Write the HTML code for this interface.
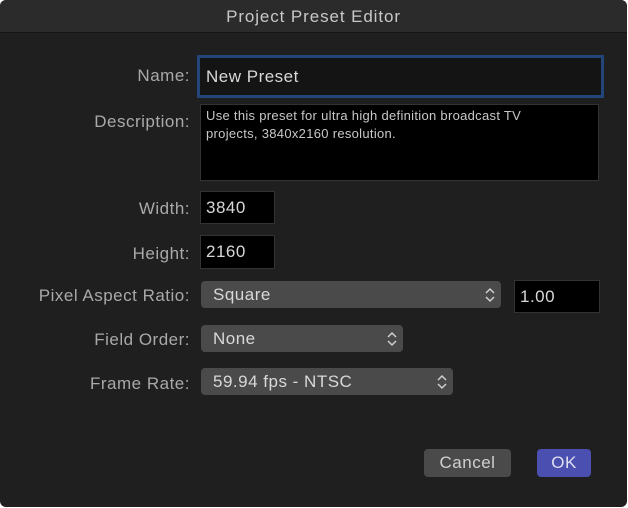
<!DOCTYPE html>
<html><head><style>
body{margin:0;width:628px;height:508px;background:#fff;overflow:hidden;font-family:"Liberation Sans",sans-serif;letter-spacing:0.5px;}
.win{position:absolute;left:0;top:0;width:627px;height:507px;background:#1f1f1f;border-radius:6px;overflow:hidden;}
.title{height:32px;background:#2b2b2b;color:#c8c8c8;font-size:17px;letter-spacing:0.9px;text-align:center;line-height:33px;border-bottom:1px solid #151515;}
.lbl{position:absolute;right:437px;color:#a9a9a9;font-size:17px;text-align:right;white-space:nowrap;}
.f{position:absolute;background:#000;border:1px solid #333;color:#d8d8d8;font-size:17px;box-sizing:border-box;padding-left:5px;}
.pop{position:absolute;background:#4a4a4a;border-radius:4px;color:#d8d8d8;font-size:17px;box-sizing:border-box;padding-left:12px;line-height:27px;}
.pop svg{position:absolute;right:6px;top:6px;}
.btn{position:absolute;border-radius:4px;color:#d0d0d0;font-size:17px;text-align:center;line-height:28px;}
</style></head><body>
<div class="win">
<div class="title">Project Preset Editor</div>
<div class="lbl" style="top:66px">Name:</div>
<div class="f" style="left:197px;top:55px;width:407px;height:43px;border:3px solid #22457a;background:#141414;line-height:37px;padding-left:6px;">New Preset</div>
<div class="lbl" style="top:112px">Description:</div>
<div class="f" style="left:200px;top:104px;width:399px;height:77px;font-size:13px;letter-spacing:0.3px;line-height:18px;padding-top:2px;padding-right:30px;color:#c8c8c8">Use this preset for ultra high definition broadcast TV projects, 3840x2160 resolution.</div>
<div class="lbl" style="top:199px">Width:</div>
<div class="f" style="left:200px;top:191px;width:75px;height:33px;line-height:31px;">3840</div>
<div class="lbl" style="top:244px">Height:</div>
<div class="f" style="left:200px;top:235px;width:75px;height:34px;line-height:32px;">2160</div>
<div class="lbl" style="top:286px">Pixel Aspect Ratio:</div>
<div class="pop" style="left:201px;top:281px;width:300px;height:27px;">Square<svg width="10" height="16" viewBox="0 0 10 16"><path d="M1 6 L5 2 L9 6 M1 10 L5 14 L9 10" stroke="#d0d0d0" stroke-width="1.5" fill="none"/></svg></div>
<div class="f" style="left:514px;top:280px;width:86px;height:33px;line-height:31px;">1.00</div>
<div class="lbl" style="top:330px">Field Order:</div>
<div class="pop" style="left:201px;top:325px;width:202px;height:27px;">None<svg width="10" height="16" viewBox="0 0 10 16"><path d="M1 6 L5 2 L9 6 M1 10 L5 14 L9 10" stroke="#d0d0d0" stroke-width="1.5" fill="none"/></svg></div>
<div class="lbl" style="top:374px">Frame Rate:</div>
<div class="pop" style="left:201px;top:368px;width:252px;height:27px;">59.94 fps - NTSC<svg width="10" height="16" viewBox="0 0 10 16"><path d="M1 6 L5 2 L9 6 M1 10 L5 14 L9 10" stroke="#d0d0d0" stroke-width="1.5" fill="none"/></svg></div>
<div class="btn" style="left:424px;top:449px;width:87px;height:28px;background:#4a4a4a;">Cancel</div>
<div class="btn" style="left:537px;top:449px;width:54px;height:28px;background:#4a4fb0;color:#e0e0f0;">OK</div>
</div>
</body></html>
